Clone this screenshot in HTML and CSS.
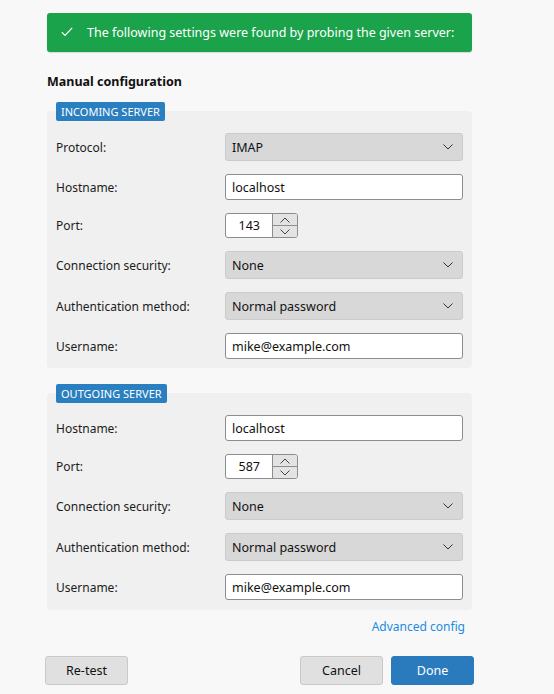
FILE: index.html
```html
<!DOCTYPE html>
<html lang="en">
<head>
<meta charset="utf-8">
<title>Manual configuration</title>
<link rel="stylesheet" href="styles.css">
</head>
<body>
<div class="page">
  <div class="banner">
    <svg class="check" width="12" height="10" viewBox="0 0 12 10"><path d="M0.8 5.2 L4 8.4 L11.2 0.8" fill="none" stroke="#fff" stroke-width="1.2"/></svg>
    <span>The following settings were found by probing the given server:</span>
  </div>

  <h2 class="title">Manual configuration</h2>

  <section class="group">
    <div class="badge">INCOMING SERVER</div>
    <div class="panel">
      <div class="row"><span class="label">Protocol:</span><div class="select"><span>IMAP</span><svg class="chev" width="10" height="6" viewBox="0 0 10 6"><path d="M0.5 0.5 L5 5 L9.5 0.5" fill="none" stroke="#333" stroke-width="1"/></svg></div></div>
      <div class="row"><span class="label">Hostname:</span><div class="input">localhost</div></div>
      <div class="row port-row"><span class="label">Port:</span><div class="spinner"><div class="spin-val">143</div><div class="spin-btns"><div class="spin-btn"><svg width="10" height="6" viewBox="0 0 10 6"><path d="M0.5 5.5 L5 1 L9.5 5.5" fill="none" stroke="#444" stroke-width="1"/></svg></div><div class="spin-btn"><svg width="10" height="6" viewBox="0 0 10 6"><path d="M0.5 0.5 L5 5 L9.5 0.5" fill="none" stroke="#444" stroke-width="1"/></svg></div></div></div></div>
      <div class="row"><span class="label">Connection security:</span><div class="select"><span>None</span><svg class="chev" width="10" height="6" viewBox="0 0 10 6"><path d="M0.5 0.5 L5 5 L9.5 0.5" fill="none" stroke="#333" stroke-width="1"/></svg></div></div>
      <div class="row"><span class="label">Authentication method:</span><div class="select"><span>Normal password</span><svg class="chev" width="10" height="6" viewBox="0 0 10 6"><path d="M0.5 0.5 L5 5 L9.5 0.5" fill="none" stroke="#333" stroke-width="1"/></svg></div></div>
      <div class="row"><span class="label">Username:</span><div class="input">mike@example.com</div></div>
    </div>
  </section>

  <section class="group group-out">
    <div class="badge">OUTGOING SERVER</div>
    <div class="panel">
      <div class="row"><span class="label">Hostname:</span><div class="input">localhost</div></div>
      <div class="row port-row"><span class="label">Port:</span><div class="spinner"><div class="spin-val">587</div><div class="spin-btns"><div class="spin-btn"><svg width="10" height="6" viewBox="0 0 10 6"><path d="M0.5 5.5 L5 1 L9.5 5.5" fill="none" stroke="#444" stroke-width="1"/></svg></div><div class="spin-btn"><svg width="10" height="6" viewBox="0 0 10 6"><path d="M0.5 0.5 L5 5 L9.5 0.5" fill="none" stroke="#444" stroke-width="1"/></svg></div></div></div></div>
      <div class="row"><span class="label">Connection security:</span><div class="select"><span>None</span><svg class="chev" width="10" height="6" viewBox="0 0 10 6"><path d="M0.5 0.5 L5 5 L9.5 0.5" fill="none" stroke="#333" stroke-width="1"/></svg></div></div>
      <div class="row"><span class="label">Authentication method:</span><div class="select"><span>Normal password</span><svg class="chev" width="10" height="6" viewBox="0 0 10 6"><path d="M0.5 0.5 L5 5 L9.5 0.5" fill="none" stroke="#333" stroke-width="1"/></svg></div></div>
      <div class="row"><span class="label">Username:</span><div class="input">mike@example.com</div></div>
    </div>
  </section>

  <div class="adv"><a class="link" href="#">Advanced config</a></div>

  <div class="buttons">
    <button class="btn">Re-test</button>
    <div class="spacer"></div>
    <button class="btn">Cancel</button>
    <button class="btn btn-primary">Done</button>
  </div>
</div>
</body>
</html>
```

FILE: styles.css
```css
html, body {
  margin: 0;
  padding: 0;
  background: #f8f8f8;
}
body {
  font-family: "Noto Sans", "Open Sans", sans-serif;
  font-size: 12px;
  color: #1c1c1c;
}
.page {
  width: 425px;
  padding: 13px 0 0 47px;
}
.banner {
  height: 39px;
  background: #1aa34b;
  border-radius: 3px;
  color: #fff;
  display: flex;
  align-items: center;
  padding-left: 14px;
  box-shadow: 0 1px 1px rgba(0,0,0,0.12);
}
.check {
  margin-right: 14px;
  margin-top: -2px;
}
.banner span {
  font-size: 12.5px;
}
.title {
  margin: 21px 0 0 0;
  font-size: 12.5px;
  font-weight: bold;
  line-height: 17px;
  color: #111;
}
.group {
  margin-top: 12px;
}
.group-out {
  margin-top: 16px;
}
.group-out .panel {
  padding-bottom: 10px;
}
.badge {
  position: relative;
  z-index: 1;
  display: inline-block;
  margin-left: 9px;
  height: 19px;
  line-height: 19px;
  padding: 0 5px;
  background: #2a7fc1;
  color: #fff;
  font-size: 11px;
  border-radius: 2px;
}
.panel {
  margin-top: -10px;
  background: #f0f0f0;
  border-radius: 4px;
  padding: 22px 8px 9px 9px;
  display: flex;
  flex-direction: column;
  gap: 13px;
}
.row {
  display: grid;
  grid-template-columns: 169px 238px;
  align-items: center;
}
.label {
  color: #1c1c1c;
}
.select {
  box-sizing: border-box;
  height: 28px;
  background: #d8d8d8;
  border: 1px solid #cbcbcb;
  border-radius: 3px;
  display: flex;
  align-items: center;
  justify-content: space-between;
  padding: 0 9px 0 6px;
  font-size: 12.5px;
  color: #111;
}
.chev {
  display: block;
}
.input {
  box-sizing: border-box;
  height: 26px;
  background: #fff;
  border: 1px solid #8d8d8d;
  border-radius: 3px;
  display: flex;
  align-items: center;
  padding: 0 6px;
  font-size: 12.5px;
  color: #111;
}
.spinner {
  box-sizing: border-box;
  width: 73px;
  height: 25px;
  display: flex;
  background: #fff;
  border: 1px solid #8d8d8d;
  border-radius: 3px;
  overflow: hidden;
}
.spin-val {
  width: 46px;
  display: flex;
  align-items: center;
  justify-content: flex-end;
  padding-right: 12px;
  box-sizing: border-box;
  font-size: 12.5px;
  color: #111;
}
.spin-btns {
  flex: 1;
  display: flex;
  flex-direction: column;
  border-left: 1px solid #8d8d8d;
}
.spin-btn {
  flex: 1;
  background: #e3e3e3;
  display: flex;
  align-items: center;
  justify-content: center;
}
.spin-btn + .spin-btn {
  border-top: 1px solid #8d8d8d;
}
.spin-btn svg {
  display: block;
}
.adv {
  display: flex;
  justify-content: flex-end;
  padding-right: 7px;
  margin-top: 9px;
}
.link {
  color: #1b8ce3;
  text-decoration: none;
  font-size: 12px;
  line-height: 16px;
}
.buttons {
  display: flex;
  margin: 21px -2px 0 -2px;
  gap: 8px;
}
.spacer {
  flex: 1;
}
.btn {
  width: 83px;
  height: 29px;
  font-family: inherit;
  font-size: 12.5px;
  color: #111;
  background: #e0e0e0;
  border: 1px solid #c9c9c9;
  border-radius: 3px;
  padding: 0;
}
.btn-primary {
  background: #2a7bbd;
  border-color: #2a7bbd;
  color: #fff;
}
```
